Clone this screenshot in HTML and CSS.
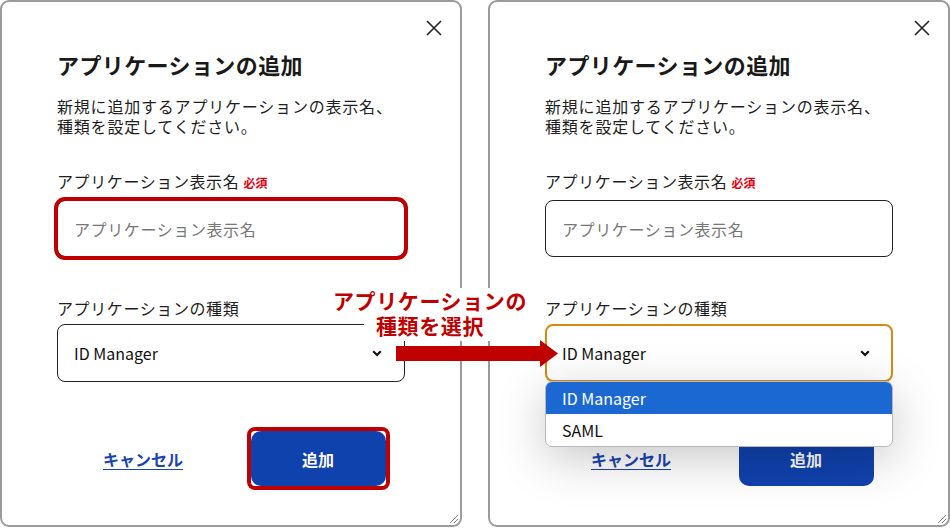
FILE: index.html
```html
<!DOCTYPE html>
<html lang="ja">
<head>
  <meta charset="UTF-8">
  <meta name="viewport" content="width=device-width, initial-scale=1.0">
  <title>アプリケーションの追加</title>
  <link rel="stylesheet" href="styles.css">
</head>
<body>

  <div class="page">
    <div class="dialog">
      <button class="close" aria-label="閉じる">
        <svg width="16" height="16" viewBox="0 0 16 16"><path d="M1 1L15 15M15 1L1 15" stroke="#222" stroke-width="1.6" fill="none"/></svg>
      </button>
      <h2 class="title">アプリケーションの追加</h2>
      <p class="desc">新規に追加するアプリケーションの表示名、<br>種類を設定してください。</p>
      <label class="label">アプリケーション表示名 <span class="req">必須</span></label>
      <input class="input marked" type="text" placeholder="アプリケーション表示名">
      <label class="label label2">アプリケーションの種類</label>
      <div class="select">
        <span>ID Manager</span>
        <svg class="chev" width="10" height="7" viewBox="0 0 10 7"><path d="M1.2 1.2L5 5L8.8 1.2" stroke="#111" stroke-width="2.2" fill="none"/></svg>
      </div>
      <div class="actions">
        <a class="cancel" href="#">キャンセル</a>
        <span class="hl"><button class="btn">追加</button></span>
      </div>
      <svg class="grip" width="10" height="10" viewBox="0 0 10 10"><path d="M9 1L1 9M9 5L5 9" stroke="#888" stroke-width="1" fill="none"/></svg>
    </div>

    <div class="dialog">
      <button class="close" aria-label="閉じる">
        <svg width="16" height="16" viewBox="0 0 16 16"><path d="M1 1L15 15M15 1L1 15" stroke="#222" stroke-width="1.6" fill="none"/></svg>
      </button>
      <h2 class="title">アプリケーションの追加</h2>
      <p class="desc">新規に追加するアプリケーションの表示名、<br>種類を設定してください。</p>
      <label class="label">アプリケーション表示名 <span class="req">必須</span></label>
      <input class="input" type="text" placeholder="アプリケーション表示名">
      <label class="label label2">アプリケーションの種類</label>
      <div class="select open">
        <span>ID Manager</span>
        <svg class="chev" width="10" height="7" viewBox="0 0 10 7"><path d="M1.2 1.2L5 5L8.8 1.2" stroke="#111" stroke-width="2.2" fill="none"/></svg>
        <ul class="menu">
          <li class="active">ID Manager</li>
          <li>SAML</li>
        </ul>
      </div>
      <div class="actions">
        <a class="cancel" href="#">キャンセル</a>
        <span class="hl plain"><button class="btn">追加</button></span>
      </div>
      <svg class="grip" width="10" height="10" viewBox="0 0 10 10"><path d="M9 1L1 9M9 5L5 9" stroke="#888" stroke-width="1" fill="none"/></svg>
    </div>
  </div>

  <!-- annotation -->
  <div class="note">
    <span class="note-line">アプリケーションの</span>
    <span class="note-line">種類を選択</span>
  </div>
  <svg class="arrow" width="163" height="28" viewBox="0 0 163 28">
    <rect x="0" y="6" width="146" height="15" fill="#c00000"/>
    <polygon points="144,0 162,13.5 144,27" fill="#c00000"/>
  </svg>

</body>
</html>
```

FILE: styles.css
```css
body { margin: 0; background: #fff; color: #1e1e1e; font-family: "Noto Sans CJK JP", "Noto Sans", sans-serif; }
.page { display: flex; gap: 26px; width: 950px; height: 528px; }

.dialog { position: relative; width: 462px; height: 527px; box-sizing: border-box; border: 2px solid #9b9b9b; border-radius: 9px; padding: 47px 55px 0; background: #fff; }
.close { position: absolute; top: 18px; right: 18px; width: 16px; height: 16px; padding: 0; border: none; background: none; line-height: 0; cursor: pointer; }
.grip { position: absolute; right: 1px; bottom: 1px; }

.title { margin: 0; height: 30px; font-size: 22px; line-height: 30px; font-weight: 700; letter-spacing: 0.4px; color: #1a1a1a; }
.desc { margin: 17px 0 0; font-size: 16px; line-height: 20px; letter-spacing: 0.8px; }
.label { display: block; height: 24px; margin-top: 33px; font-size: 16px; line-height: 24px; letter-spacing: 0.6px; }
.label2 { margin-top: 39px; }
.req { color: #e60012; font-size: 12px; font-weight: 700; letter-spacing: 0; line-height: 1; }

.input { display: block; width: 100%; height: 57px; margin-top: 7px; box-sizing: border-box; border: 1px solid #222; border-radius: 8px; padding: 0 16px; font-family: inherit; font-size: 16px; letter-spacing: 0.6px; color: #222; background: #fff; }
.input::placeholder { color: #777; }
.input.marked { outline: 4px solid #c00000; outline-offset: -1px; }

.select { position: relative; display: flex; align-items: center; justify-content: space-between; height: 58px; margin-top: 4px; box-sizing: border-box; border: 1px solid #222; border-radius: 8px; padding: 0 22px 0 16px; font-size: 16px; color: #111; }
.select.open { border: 2px solid #d68a12; padding: 0 21px 0 15px; }
.menu { position: absolute; top: calc(100% + 1px); left: -2px; right: -2px; margin: 0; padding: 0; list-style: none; background: #fff; border: 1px solid #b8b8b8; border-radius: 7px; overflow: hidden; box-shadow: 0 12px 48px rgba(0, 0, 0, 0.22); z-index: 2; }
.menu li { height: 32px; line-height: 32px; padding: 0 16px; color: #111; }
.menu li.active { background: #1b68d3; color: #fff; }

.actions { display: grid; grid-template-columns: 1fr 1fr; align-items: center; justify-items: center; height: 63px; margin-top: 45px; }
.cancel { color: #1a44b0; font-size: 16px; font-weight: 700; text-decoration: underline; text-underline-offset: 3px; margin-right: 2px; }
.hl { display: inline-block; line-height: 0; border: 4px solid #c00000; border-radius: 8px; }
.hl.plain { border-color: transparent; }
.btn { width: 135px; height: 55px; border: none; border-radius: 10px; background: #1042ae; color: #fff; font-family: inherit; font-size: 16px; font-weight: 700; cursor: pointer; }

.note { position: absolute; left: 320px; top: 288px; width: 220px; text-align: center; color: #c00000; font-size: 21px; font-weight: 700; letter-spacing: 0.6px; line-height: 25px; }
.note-line { display: block; width: fit-content; margin: 0 auto; padding: 0 8px; background: #fff; }
.note-line + .note-line { padding: 0 12px 3px; }
.arrow { position: absolute; left: 396px; top: 340px; }
```
